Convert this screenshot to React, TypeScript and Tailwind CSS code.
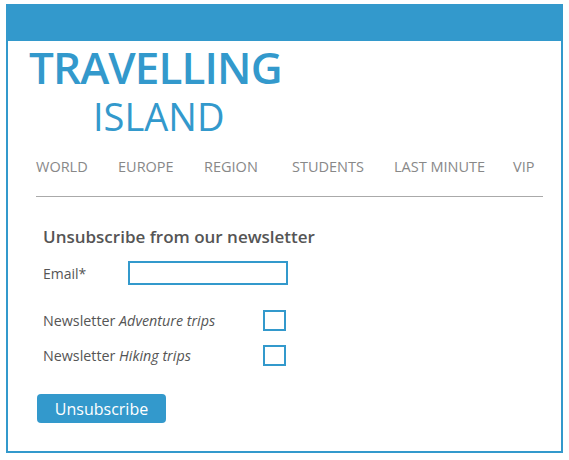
import React from 'react';

const navItems = [
  { label: 'WORLD', className: 'w-[82px]' },
  { label: 'EUROPE', className: 'w-[86px]' },
  { label: 'REGION', className: 'w-[88px]' },
  { label: 'STUDENTS', className: 'w-[102px]' },
  { label: 'LAST MINUTE', className: 'w-[119px]' },
  { label: 'VIP', className: '' },
];

const App: React.FC = () => {
  return (
    <div className="pl-[6px] pt-[4px] font-['Open_Sans',sans-serif] text-[#555]">
      <div className="w-[557px] h-[449px] border-2 border-t-0 border-[#3399cc] bg-white">
        {/* Top bar */}
        <div className="-mx-[2px] h-[37px] bg-[#3399cc]" />

        {/* Logo */}
        <div className="pl-[21px] text-[#3399cc] leading-none">
          <div className="pt-[4px] text-[44px] font-semibold tracking-[-0.9px]">TRAVELLING</div>
          <div className="pl-[64px] pt-[8px] text-[38px]">ISLAND</div>
        </div>

        {/* Navigation */}
        <nav className="ml-[28px] mr-[18px] mt-[21px] flex border-b border-[#aaa] pb-[18px] text-[14.5px] text-[#888]">
          {navItems.map((item) => (
            <span key={item.label} className={item.className}>
              {item.label}
            </span>
          ))}
        </nav>

        {/* Form */}
        <div className="pl-[35px] pt-[27px]">
          <h2 className="text-[17px] font-semibold text-[#555]">Unsubscribe from our newsletter</h2>

          <div className="mt-[12px] flex items-center">
            <label className="w-[85px] text-[14px]">Email*</label>
            <input
              type="text"
              className="h-[24px] w-[160px] border-2 border-[#3399cc] outline-none"
            />
          </div>

          <div className="mt-[25px] flex items-center">
            <span className="w-[220px] text-[14.3px]">
              Newsletter <i>Adventure trips</i>
            </span>
            <span className="block h-[21px] w-[23px] border-2 border-[#3399cc]" />
          </div>

          <div className="mt-[13px] flex items-center">
            <span className="w-[220px] text-[14.3px]">
              Newsletter <i>Hiking trips</i>
            </span>
            <span className="block h-[21px] w-[23px] border-2 border-[#3399cc]" />
          </div>

          <button className="-ml-[6px] mt-[28px] h-[29px] w-[129px] rounded-[4px] bg-[#3399cc] text-[16px] text-white">
            Unsubscribe
          </button>
        </div>
      </div>
    </div>
  );
};

export default App;
